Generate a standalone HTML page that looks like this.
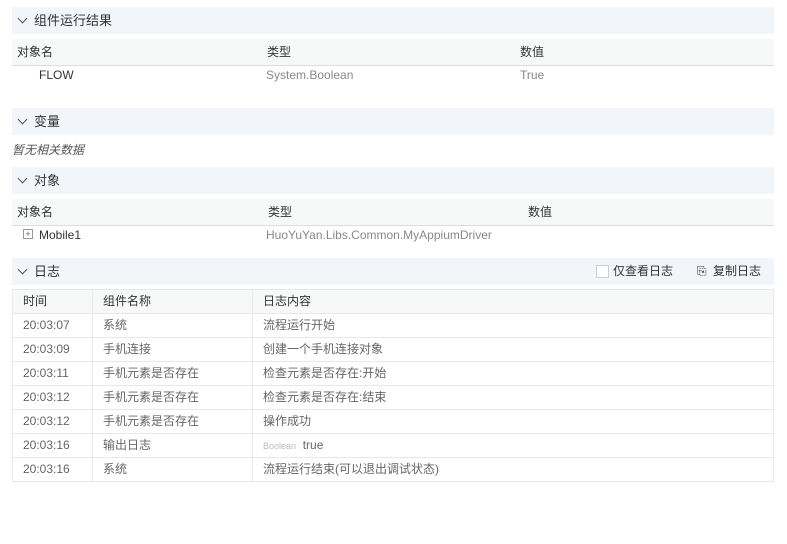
<!DOCTYPE html>
<html><head><meta charset="utf-8"><style>
body{margin:0;width:787px;height:544px;background:#fff;font-family:"Liberation Sans","Noto Sans CJK SC",sans-serif;font-size:12px;color:#333;position:relative;overflow:hidden}
.a{position:absolute}
.hd{position:absolute;left:12px;width:762px;height:27px;background:#f2f5fa;font-size:13px;line-height:27px;color:#333}
.hd .c{position:absolute;left:7px;top:8px;width:6px;height:6px;border-right:1px solid #555;border-bottom:1px solid #555;transform:rotate(45deg)}
.hd .t{position:absolute;left:22px}
.th{position:absolute;left:12px;width:762px;height:26px;background:#f7f8f8;border-bottom:1px solid #ddd;line-height:26px;color:#333}
table{position:absolute;left:12px;top:289px;width:762px;border-collapse:collapse}
td{border:1px solid #e6e8eb;height:23px;line-height:21px;padding:0 0 0 10px;color:#666;font-size:12px;vertical-align:middle;overflow:hidden}
tr:first-child td{background:#f7f8f8;color:#333}
</style></head><body>
<div class="hd" style="top:7px"><span class="c"></span><span class="t">组件运行结果</span></div>
<div class="th" style="top:39px"><span class="a" style="left:5px">对象名</span><span class="a" style="left:255px">类型</span><span class="a" style="left:508px">数值</span></div>
<div class="a" style="top:68px;left:39px;color:#333">FLOW</div>
<div class="a" style="top:68px;left:266px;color:#888">System.Boolean</div>
<div class="a" style="top:68px;left:520px;color:#888">True</div>
<div class="hd" style="top:108px"><span class="c"></span><span class="t">变量</span></div>
<div class="a" style="top:141px;left:12px;font-style:italic;color:#555">暂无相关数据</div>
<div class="hd" style="top:167px"><span class="c"></span><span class="t">对象</span></div>
<div class="th" style="top:199px"><span class="a" style="left:5px">对象名</span><span class="a" style="left:256px">类型</span><span class="a" style="left:516px">数值</span></div>
<div class="a" style="top:229px;left:23px;width:8px;height:8px;border:1px solid #999;font-size:9px;line-height:8px;text-align:center;color:#666">+</div>
<div class="a" style="top:228px;left:39px;color:#333">Mobile1</div>
<div class="a" style="top:228px;left:266px;color:#888">HuoYuYan.Libs.Common.MyAppiumDriver</div>
<div class="hd" style="top:258px"><span class="c"></span><span class="t">日志</span>
<span class="a" style="left:584px;top:7px;width:11px;height:11px;border:1px solid #ccc;background:#fff"></span>
<span class="a" style="left:601px;font-size:12px">仅查看日志</span>
<span class="a" style="left:685px;font-size:12px">⎘</span>
<span class="a" style="left:701px;font-size:12px">复制日志</span></div>
<table>
<tr><td style="width:69px">时间</td><td style="width:149px">组件名称</td><td>日志内容</td></tr>
<tr><td>20:03:07</td><td>系统</td><td>流程运行开始</td></tr>
<tr><td>20:03:09</td><td>手机连接</td><td>创建一个手机连接对象</td></tr>
<tr><td>20:03:11</td><td>手机元素是否存在</td><td>检查元素是否存在:开始</td></tr>
<tr><td>20:03:12</td><td>手机元素是否存在</td><td>检查元素是否存在:结束</td></tr>
<tr><td>20:03:12</td><td>手机元素是否存在</td><td>操作成功</td></tr>
<tr><td>20:03:16</td><td>输出日志</td><td><span style="font-size:9px;color:#bbb">Boolean</span>&nbsp; true</td></tr>
<tr><td>20:03:16</td><td>系统</td><td>流程运行结束(可以退出调试状态)</td></tr>
</table>
</body></html>
